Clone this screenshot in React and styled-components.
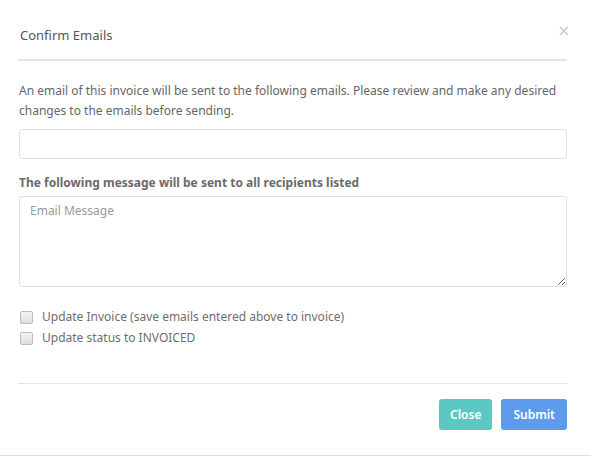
import React from "react";
import styled, { createGlobalStyle } from "styled-components";

const GlobalStyle = createGlobalStyle`
  html, body {
    margin: 0;
    padding: 0;
    background: #ffffff;
  }
  body {
    font-family: "Noto Sans", "Open Sans", sans-serif;
    color: #666;
  }
`;

const Modal = styled.div`
  width: 591px;
  height: 456px;
  box-sizing: border-box;
  background: #fff;
  border-bottom: 1px solid #dcdcdc;
  display: flex;
  flex-direction: column;
`;

const Header = styled.div`
  margin: 0 24px 0 18px;
  height: 61px;
  padding: 26px 0 0 2px;
  border-bottom: 2px solid #e5e5e5;
  display: flex;
  align-items: flex-start;
  justify-content: space-between;
  box-sizing: border-box;
`;

const Title = styled.h4`
  margin: 0;
  font-size: 13px;
  line-height: 18px;
  font-weight: 400;
  color: #555;
`;

const CloseX = styled.button`
  border: none;
  background: none;
  padding: 0;
  margin-top: -2px;
  margin-right: -3px;
  font-size: 15px;
  line-height: 1;
  color: #c8c8c8;
  cursor: pointer;
  font-family: "DejaVu Sans", sans-serif;
`;

const Body = styled.div`
  padding: 20px 24px 0 19px;
  display: flex;
  flex-direction: column;
`;

const Intro = styled.p`
  margin: 0;
  font-size: 12px;
  line-height: 20px;
  color: #666;
`;

const TextInput = styled.input`
  margin-top: 8px;
  height: 30px;
  box-sizing: border-box;
  border: 1px solid #e0e0e0;
  border-radius: 3px;
  padding: 0 10px;
  font: inherit;
`;

const Label = styled.label`
  margin-top: 16px;
  font-size: 12px;
  font-weight: 700;
  color: #6b6b6b;
  line-height: 16px;
`;

const MessageBox = styled.textarea`
  margin-top: 5px;
  height: 91px;
  box-sizing: border-box;
  border: 1px solid #e0e0e0;
  border-radius: 3px;
  padding: 5px 10px;
  font-family: "Noto Sans", "Open Sans", sans-serif;
  font-size: 12px;
  color: #666;
  resize: vertical;
  &::placeholder {
    color: #999;
  }
`;

const Checks = styled.div`
  margin-top: 21px;
  display: flex;
  flex-direction: column;
  gap: 3px;
`;

const CheckRow = styled.label`
  display: flex;
  align-items: center;
  gap: 9px;
  font-size: 12px;
  color: #6e6e6e;
  line-height: 18px;
`;

const Box = styled.span`
  width: 11px;
  height: 11px;
  margin-left: 1px;
  border: 1px solid #bcbcbc;
  border-radius: 2px;
  background: linear-gradient(#f4f4f4, #dedede);
  flex-shrink: 0;
`;

const Footer = styled.div`
  margin: 36px 24px 0 18px;
  border-top: 1px solid #e5e5e5;
  padding-top: 15px;
  display: flex;
  justify-content: flex-end;
  gap: 9px;
`;

const Button = styled.button`
  height: 31px;
  padding: 0 ${(p) => p.px}px;
  border: none;
  border-radius: 3px;
  background: ${(p) => p.bg};
  color: #fff;
  font-family: "Noto Sans", "Open Sans", sans-serif;
  font-size: 12px;
  font-weight: 600;
  cursor: pointer;
`;

export default function App() {
  return (
    <>
      <GlobalStyle />
      <Modal>
        <Header>
          <Title>Confirm Emails</Title>
          <CloseX aria-label="close">×</CloseX>
        </Header>
        <Body>
          <Intro>
            An email of this invoice will be sent to the following emails. Please review and make any desired
            changes to the emails before sending.
          </Intro>
          <TextInput type="text" />
          <Label>The following message will be sent to all recipients listed</Label>
          <MessageBox placeholder="Email Message" />
          <Checks>
            <CheckRow>
              <Box />
              Update Invoice (save emails entered above to invoice)
            </CheckRow>
            <CheckRow>
              <Box />
              Update status to INVOICED
            </CheckRow>
          </Checks>
        </Body>
        <Footer>
          <Button px={11} bg="#5bc8c4">Close</Button>
          <Button px={12} bg="#5d9cec">Submit</Button>
        </Footer>
      </Modal>
    </>
  );
}
